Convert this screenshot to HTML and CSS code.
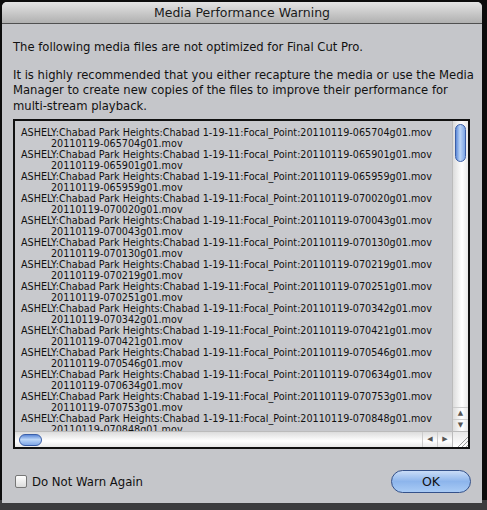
FILE: index.html
```html
<!DOCTYPE html>
<html lang="en">
<head>
  <meta charset="UTF-8" />
  <title>Media Performance Warning</title>
  <link rel="stylesheet" href="styles.css">
</head>
<body>
  <div class="escritorio">
    <div class="ventana">
      <div class="titulo">Media Performance Warning</div>

      <div class="contenido">
        <p class="aviso">The following media files are not optimized for Final Cut Pro.</p>
        <p class="aviso ultimo">It is highly recommended that you either recapture the media or use the Media Manager to create new copies of the files to improve their performance for multi-stream playback.</p>

        <div class="lista">
          <div class="lista-items">
            <div class="item">ASHELY:Chabad Park Heights:Chabad 1-19-11:Focal_Point:20110119-065704g01.mov<span>20110119-065704g01.mov</span></div>
            <div class="item">ASHELY:Chabad Park Heights:Chabad 1-19-11:Focal_Point:20110119-065901g01.mov<span>20110119-065901g01.mov</span></div>
            <div class="item">ASHELY:Chabad Park Heights:Chabad 1-19-11:Focal_Point:20110119-065959g01.mov<span>20110119-065959g01.mov</span></div>
            <div class="item">ASHELY:Chabad Park Heights:Chabad 1-19-11:Focal_Point:20110119-070020g01.mov<span>20110119-070020g01.mov</span></div>
            <div class="item">ASHELY:Chabad Park Heights:Chabad 1-19-11:Focal_Point:20110119-070043g01.mov<span>20110119-070043g01.mov</span></div>
            <div class="item">ASHELY:Chabad Park Heights:Chabad 1-19-11:Focal_Point:20110119-070130g01.mov<span>20110119-070130g01.mov</span></div>
            <div class="item">ASHELY:Chabad Park Heights:Chabad 1-19-11:Focal_Point:20110119-070219g01.mov<span>20110119-070219g01.mov</span></div>
            <div class="item">ASHELY:Chabad Park Heights:Chabad 1-19-11:Focal_Point:20110119-070251g01.mov<span>20110119-070251g01.mov</span></div>
            <div class="item">ASHELY:Chabad Park Heights:Chabad 1-19-11:Focal_Point:20110119-070342g01.mov<span>20110119-070342g01.mov</span></div>
            <div class="item">ASHELY:Chabad Park Heights:Chabad 1-19-11:Focal_Point:20110119-070421g01.mov<span>20110119-070421g01.mov</span></div>
            <div class="item">ASHELY:Chabad Park Heights:Chabad 1-19-11:Focal_Point:20110119-070546g01.mov<span>20110119-070546g01.mov</span></div>
            <div class="item">ASHELY:Chabad Park Heights:Chabad 1-19-11:Focal_Point:20110119-070634g01.mov<span>20110119-070634g01.mov</span></div>
            <div class="item">ASHELY:Chabad Park Heights:Chabad 1-19-11:Focal_Point:20110119-070753g01.mov<span>20110119-070753g01.mov</span></div>
            <div class="item">ASHELY:Chabad Park Heights:Chabad 1-19-11:Focal_Point:20110119-070848g01.mov<span>20110119-070848g01.mov</span></div>
          </div>

          <!-- barra vertical -->
          <div class="barra-v">
            <div class="pista-v"><div class="pulgar-v"></div></div>
            <div class="flecha">&#9650;</div>
            <div class="flecha">&#9660;</div>
          </div>

          <!-- barra horizontal -->
          <div class="barra-h">
            <div class="pista-h"><div class="pulgar-h"></div></div>
            <div class="flecha-h">&#9664;</div>
            <div class="flecha-h">&#9654;</div>
          </div>
          <div class="esquina">
            <svg width="16" height="16" viewBox="0 0 16 16">
              <path d="M5 15 L15 5 M9 15 L15 9 M13 15 L15 13" stroke="#9a9a9a" stroke-width="1" fill="none"/>
            </svg>
          </div>
        </div>

        <div class="pie">
          <label class="casilla"><span class="check"></span>Do Not Warn Again</label>
          <button class="ok">OK</button>
        </div>
      </div>
    </div>
  </div>
</body>
</html>
```

FILE: styles.css
```css
body {
  margin: 0;
  padding: 0;
  background-color: #0c0c0c;
  font-family: 'DejaVu Sans', 'Liberation Sans', sans-serif;
}

.escritorio {
  width: 487px;
  height: 510px;
  background: linear-gradient(to bottom, #0c0c0c 0, #0c0c0c 500px, #3c3c3e 500px);
  padding: 2px 5px 0 2px;
  box-sizing: border-box;
}

.ventana {
  width: 480px;
  height: 501px;
  background-color: #c5c6ca;
  border-radius: 5px 5px 0 0;
  display: flex;
  flex-direction: column;
  overflow: hidden;
}

.titulo {
  height: 21px;
  line-height: 21px;
  text-align: center;
  font-size: 12.5px;
  color: #1a1a1a;
  background: linear-gradient(to bottom, #e4e4e4, #b0b0b0);
  border-bottom: 1px solid #505050;
}

.contenido {
  padding: 16px 10px 0 11px;
  display: flex;
  flex-direction: column;
}

.aviso {
  margin: 0 -8px 12px 0;
  font-size: 11.6px;
  line-height: 15.5px;
  color: #111;
}

.aviso.ultimo {
  margin-bottom: 5px;
}

.lista {
  width: 457px;
  height: 330px;
  box-sizing: border-box;
  border: 2px solid #111;
  display: grid;
  grid-template-columns: 1fr 16px;
  grid-template-rows: 1fr 16px;
  background-color: #c8c9cd;
}

.lista-items {
  overflow: hidden;
  padding: 6px 0 0 6px;
}

.item {
  font-size: 9.65px;
  line-height: 11px;
  color: #111;
  white-space: nowrap;
}

.item span {
  display: block;
  padding-left: 30px;
}

.barra-v {
  display: flex;
  flex-direction: column;
  background: linear-gradient(to right, #dcdcdc, #ffffff 60%, #e8e8e8);
  border-left: 1px solid #bbb;
}

.pista-v {
  flex: 1;
  padding: 3px 2px;
}

.pulgar-v {
  height: 36px;
  border-radius: 6px;
  border: 1px solid #3b5fa8;
  background: linear-gradient(to right, #5d89d8, #bcd6f7 45%, #7ea6e6);
}

.flecha {
  height: 11px;
  font-size: 7px;
  line-height: 11px;
  text-align: center;
  color: #555;
  border-top: 1px solid #ccc;
}

.barra-h {
  display: flex;
  background: linear-gradient(to bottom, #dcdcdc, #ffffff 60%, #e8e8e8);
  border-top: 1px solid #bbb;
}

.pista-h {
  flex: 1;
  padding: 2px 4px;
}

.pulgar-h {
  width: 21px;
  height: 10px;
  border-radius: 6px;
  border: 1px solid #3b5fa8;
  background: linear-gradient(to bottom, #5d89d8, #bcd6f7 45%, #7ea6e6);
}

.flecha-h {
  width: 14px;
  font-size: 7px;
  line-height: 15px;
  text-align: center;
  color: #555;
  border-left: 1px solid #ccc;
}

.esquina {
  background: linear-gradient(to bottom, #e8e8e8, #ffffff);
  border-left: 1px solid #bbb;
  border-top: 1px solid #bbb;
}

.pie {
  display: flex;
  justify-content: space-between;
  align-items: center;
  padding: 21px 0 0 2px;
}

.casilla {
  display: flex;
  align-items: center;
  gap: 5px;
  font-size: 11.7px;
  color: #111;
}

.check {
  width: 10px;
  height: 11px;
  border: 1px solid #777;
  border-radius: 2px;
  background: linear-gradient(to bottom, #ffffff, #dcdcdc);
}

.ok {
  width: 80px;
  height: 23px;
  border-radius: 12px;
  border: 1px solid #34518a;
  background: linear-gradient(to bottom, #c9dcf7, #8db5ec 50%, #a9cbf5);
  font-family: 'DejaVu Sans', sans-serif;
  font-size: 12.5px;
  color: #111;
  margin-right: 1px;
}
```
